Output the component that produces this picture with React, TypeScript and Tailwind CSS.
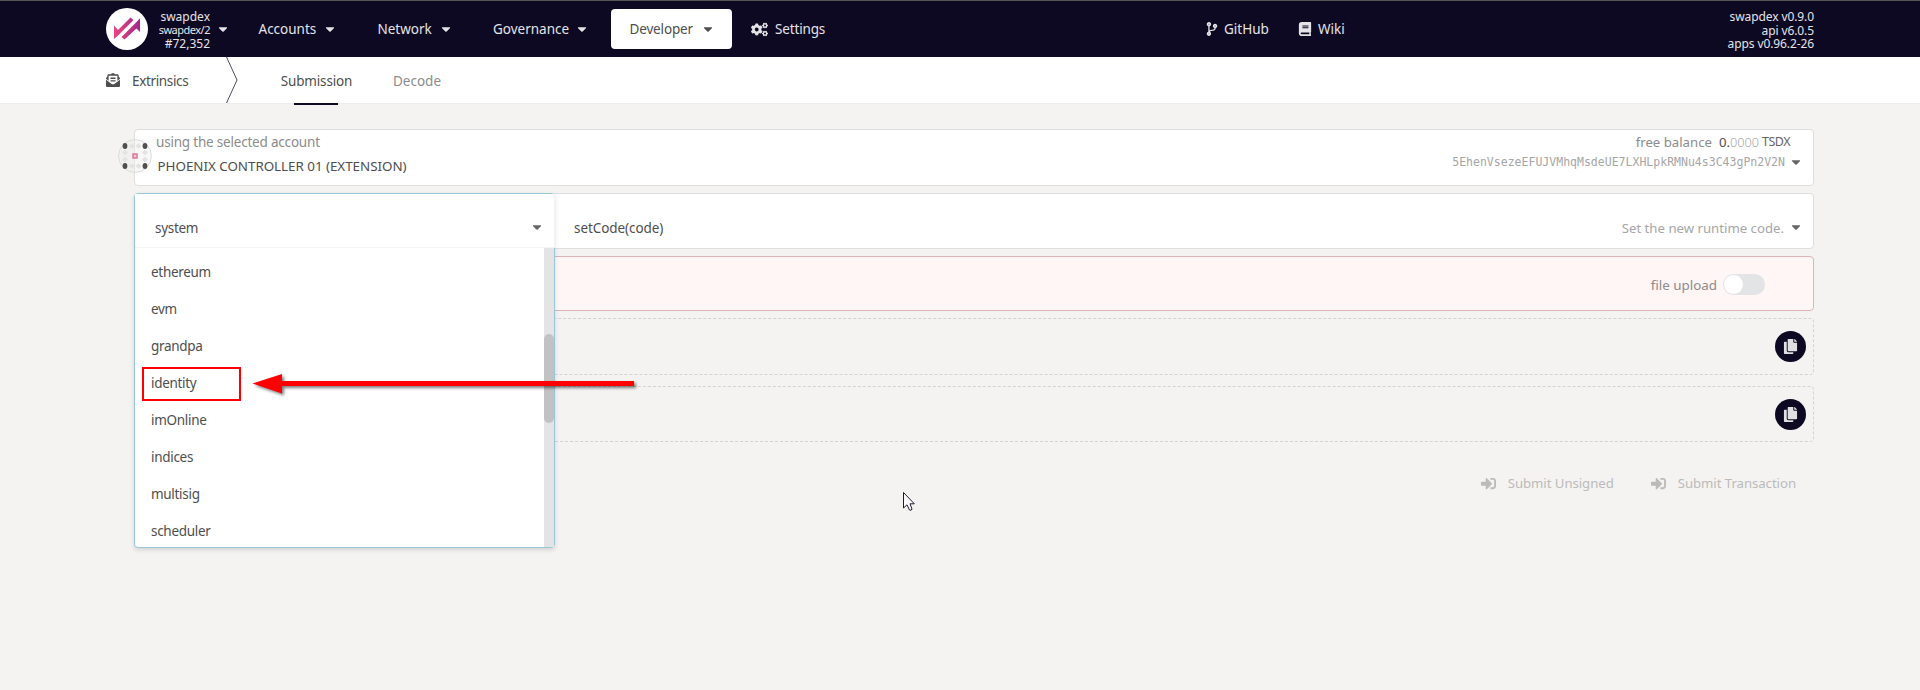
import type { ReactNode } from "react";
import { FaBook, FaCaretDown, FaCodeBranch, FaCogs, FaCopy, FaEnvelopeOpenText, FaSignInAlt } from "react-icons/fa";

const modules = ["ethereum", "evm", "grandpa", "identity", "imOnline", "indices", "multisig", "scheduler"];

function Caret({ className = "" }: { className?: string }) {
  return <FaCaretDown className={`shrink-0 ${className}`} size={14} />;
}

function NavMenu({ label, className }: { label: string; className: string }) {
  return (
    <div className={`flex h-10 shrink-0 items-center justify-between ${className}`}>
      <span>{label}</span>
      <Caret />
    </div>
  );
}

function Logo() {
  return (
    <svg className="h-[42px] w-[42px] shrink-0" viewBox="0 0 42 42">
      <defs>
        <linearGradient id="brand" x1="0" x2="1">
          <stop offset="0" stopColor="#ee4480" />
          <stop offset="1" stopColor="#a02a8a" />
        </linearGradient>
      </defs>
      <circle cx="21" cy="21" r="21" fill="#fff" />
      <path
        d="M8 17.5L12 22L24.5 9.5L27.5 12L11.5 28L8 31ZM34 24L30.5 20.5L18.5 31.5L15.5 29L30 14.5L34 10.3Z"
        fill="url(#brand)"
      />
    </svg>
  );
}

function Header() {
  return (
    <header className="flex h-[57px] items-center border-t border-[#545454] bg-[#0d0923] pl-[106px] pr-[106px] text-[13.5px] text-[#e4e3e6]">
      <Logo />
      <div className="ml-3 flex w-[73px] items-center">
        <div className="w-[50px] pt-[2px] text-right text-[12px] leading-[14px]">
          <div>swapdex</div>
          <div className="-ml-1 text-[11px] leading-[12px] tracking-[-0.5px]">swapdex/2</div>
          <div className="leading-[15px]">#72,352</div>
        </div>
        <Caret className="ml-[6px]" />
      </div>
      <NavMenu label="Accounts" className="ml-[25.5px] w-[78px]" />
      <NavMenu label="Network" className="ml-[41px] w-[75px]" />
      <NavMenu label="Governance" className="ml-[40.5px] w-[95.5px]" />
      <NavMenu label="Developer" className="ml-[22.5px] w-[121px] rounded bg-white pl-[18.5px] pr-[17px] text-[#4e4e4e] tracking-[-0.15px]" />
      <div className="ml-[19px] flex w-[430px] shrink-0 items-center">
        <FaCogs size={17} className="mr-[7px]" />
        <span className="tracking-[-0.15px]">Settings</span>
      </div>
      <div className="ml-[25px] flex w-[92px] shrink-0 items-center">
        <FaCodeBranch size={14} className="-ml-px mr-[5px]" />
        <span>GitHub</span>
      </div>
      <div className="flex items-center">
        <FaBook size={14} className="mr-[6px]" />
        <span>Wiki</span>
      </div>
      <div className="ml-auto pt-[3px] text-right text-[12px] leading-[13.5px] tracking-[-0.1px]">
        <div>swapdex v0.9.0</div>
        <div>api v6.0.5</div>
        <div>apps v0.96.2-26</div>
      </div>
    </header>
  );
}

function TabBar() {
  return (
    <nav className="flex h-[47px] items-stretch border-b border-[#ececeb] bg-white pl-[106px] text-[13.5px] text-[#4e4e4e]">
      <div className="flex w-[120px] items-center">
        <FaEnvelopeOpenText size={14} className="mr-3" />
        <span className="pt-[2px] tracking-[-0.35px]">Extrinsics</span>
      </div>
      <svg className="h-[46px] w-3" viewBox="0 0 12 46" fill="none" stroke="#4d4a5c">
        <path d="M0.5 0L11 23L0.5 46" />
      </svg>
      <div className="ml-[43px] flex w-[71px] flex-col items-center">
        <span className="h-[46px] leading-[48px] tracking-[-0.15px]">Submission</span>
        <div className="mr-[2px] h-[2px] w-11 shrink-0 bg-[#0d0923]" />
      </div>
      <span className="ml-[41px] leading-[48px] text-[#8c8c8c]">Decode</span>
    </nav>
  );
}

function Identicon() {
  return (
    <svg className="absolute -left-[17px] top-[9px] h-[34px] w-[34px]" viewBox="0 0 34 34">
      <circle cx="17" cy="17" r="16.4" fill="#eee" fillOpacity="0.4" stroke="#dcdcdc" />
      <path
        fill="#e4e4e4"
        d="M14 4l3 3-3 3-3-3zM20.500 4l3 3-3 3-3-3zM14 24l3 3-3 3-3-3zM20.500 24l3 3-3 3-3-3zM7 10.500l3 3-3 3-3-3zM7 17.500l3 3-3 3-3-3zM27 10.500l3 3-3 3-3-3zM27 17.500l3 3-3 3-3-3z"
      />
      <g fill="#505050">
        <ellipse cx="7" cy="7" rx="2.400" ry="2.900" />
        <ellipse cx="27" cy="7" rx="2.400" ry="2.900" />
        <ellipse cx="7" cy="27" rx="2.400" ry="2.900" />
        <ellipse cx="27" cy="27" rx="2.400" ry="2.900" />
      </g>
      <rect x="15" y="15" width="4" height="4" fill="#f1c5d3" stroke="#d9799b" strokeWidth="1.500" />
    </svg>
  );
}

function AccountCard() {
  return (
    <section className="relative flex h-[57px] justify-between rounded border border-[#dededd] bg-white">
      <div className="pl-[21px] text-[13.5px] leading-5">
        <div className="pt-[2px] tracking-[-0.2px] text-[#8c8c8c]">using the selected account</div>
        <div className="pl-[1.5px] pt-[4px] text-[13.4px] tracking-[-0.03px] text-[#4e4e4e]">PHOENIX CONTROLLER 01 (EXTENSION)</div>
      </div>
      <div className="flex flex-col items-end text-[13.2px] leading-5">
        <div className="flex pr-[23px] pt-[2px] text-[#8c8c8c]">
          <span>free balance</span>
          <span className="ml-[7px] text-[#4e4e4e]">0.</span>
          <span className="text-[12.7px] font-light text-[#a6a6a6]">0000</span>
          <span className="ml-[3px] text-[12.5px] tracking-[-0.5px] text-[#666]">TSDX</span>
        </div>
        <div className="flex items-center pr-[10px] font-['DejaVu_Sans_Mono',monospace] text-[11.53px] text-[#a6a6a6]">
          <span>5EhenVsezeEFUJVMhqMsdeUE7LXHLpkRMNu4s3C43gPn2V2N</span>
          <Caret className="ml-[4px] text-[#666]" />
        </div>
      </div>
      <Identicon />
    </section>
  );
}

function ModuleMenu() {
  return (
    <div className="absolute -left-px -top-px z-10 flex h-[355px] w-[421px] flex-col rounded border border-[#96c8da] bg-white shadow-[0_2px_4px_rgba(34,36,38,0.15)]">
      <div className="-mr-px flex h-[54px] shrink-0 items-center justify-between border-b border-r border-[#f3f3f3] bg-white pl-[20px] pr-[10px] pt-[15px] text-[13.5px] tracking-[-0.3px] text-[#4e4e4e]">
        <span>system</span>
        <Caret className="-mt-[3px] text-[#666]" />
      </div>
      <div className="flex min-h-0 flex-1 justify-between">
        <ul className="flex flex-col overflow-hidden pl-4 pt-[6px] text-[13.5px] leading-[37px] tracking-[-0.3px] text-[#4e4e4e]">
          {modules.map((name) => (
            <li key={name} className="h-[37px] shrink-0">
              {name}
            </li>
          ))}
        </ul>
        <div className="w-[10px] bg-[#e4e4e4] pt-[86px]">
          <div className="h-[89px] rounded-full bg-[#c2c2c2]" />
        </div>
      </div>
    </div>
  );
}

function MethodCard() {
  return (
    <section className="relative mt-[7px] flex h-[56px] items-center rounded border border-[#dededd] bg-white pl-[439px] pr-[10px] pt-[15px] text-[13.5px]">
      <span className="tracking-[-0.07px] text-[#4e4e4e]">setCode(code)</span>
      <span className="ml-auto text-[13.2px] text-[#a6a6a6]">Set the new runtime code.</span>
      <Caret className="-mt-[3px] ml-[5px] text-[#666]" />
      <ModuleMenu />
    </section>
  );
}

function UploadCard() {
  return (
    <section className="mt-[7px] flex h-[55px] items-center justify-end rounded border border-[#e0b4b4] bg-[#fff6f5] pr-12 pt-[2px] text-[13.4px] text-[#8c8c8c]">
      <span className="pt-px">file upload</span>
      <div className="ml-[6px] flex h-[21px] w-[42px] items-center rounded-full bg-[#e2e4e5] pl-px">
        <div className="h-[19px] w-[19px] rounded-full bg-white" />
      </div>
    </section>
  );
}

function CopyRow({ className }: { className: string }) {
  return (
    <section className={`flex items-center justify-end rounded border border-dashed border-[#d3d3d1] pr-[7px] ${className}`}>
      <div className="flex h-[31px] w-[31px] items-center justify-center rounded-full bg-[#0d0923] text-[#e0dfe2]">
        <FaCopy size={15} />
      </div>
    </section>
  );
}

function SubmitButton({ children, className }: { children: ReactNode; className: string }) {
  return (
    <div className={`flex items-center ${className}`}>
      <FaSignInAlt size={15} className="mr-3" />
      <span>{children}</span>
    </div>
  );
}

function IdentityCallout() {
  return (
    <svg className="pointer-events-none absolute left-[140px] top-[364px] z-20" width="504" height="42" viewBox="0 0 504 42">
      <rect x="3" y="4" width="97" height="32" fill="none" stroke="#f00" strokeWidth="2" />
      <path
        d="M112.500 19.500L142 10V17H494V22H142V29.500Z"
        fill="#f00"
        className="drop-shadow-[2px_2px_1.5px_rgba(0,0,0,0.5)]"
      />
    </svg>
  );
}

function Pointer() {
  return (
    <svg className="absolute left-[902px] top-[491px] z-20" width="14" height="22" viewBox="0 0 14 22">
      <path d="M1.500 1.500V17L5 13.800L7.500 19Q9.500 20 10 18L8 12.800H12.300Z" fill="#fff" stroke="#1d1b2b" strokeWidth="1" />
    </svg>
  );
}

export default function App() {
  return (
    <div className="relative h-[690px] w-[1920px] overflow-hidden bg-[#f4f3f1] font-['Noto_Sans','Open_Sans',sans-serif]">
      <Header />
      <TabBar />
      <main className="ml-[134px] mt-[25px] w-[1680px]">
        <AccountCard />
        <MethodCard />
        <UploadCard />
        <CopyRow className="mt-[7px] h-[57px]" />
        <CopyRow className="mt-[11px] h-[56px]" />
        <div className="mt-[32px] flex justify-end pr-[18px] text-[13.2px] tracking-[-0.05px] text-[#bbbbba]">
          <SubmitButton className="mr-[37px]">Submit Unsigned</SubmitButton>
          <SubmitButton className="">Submit Transaction</SubmitButton>
        </div>
      </main>
      <IdentityCallout />
      <Pointer />
    </div>
  );
}
